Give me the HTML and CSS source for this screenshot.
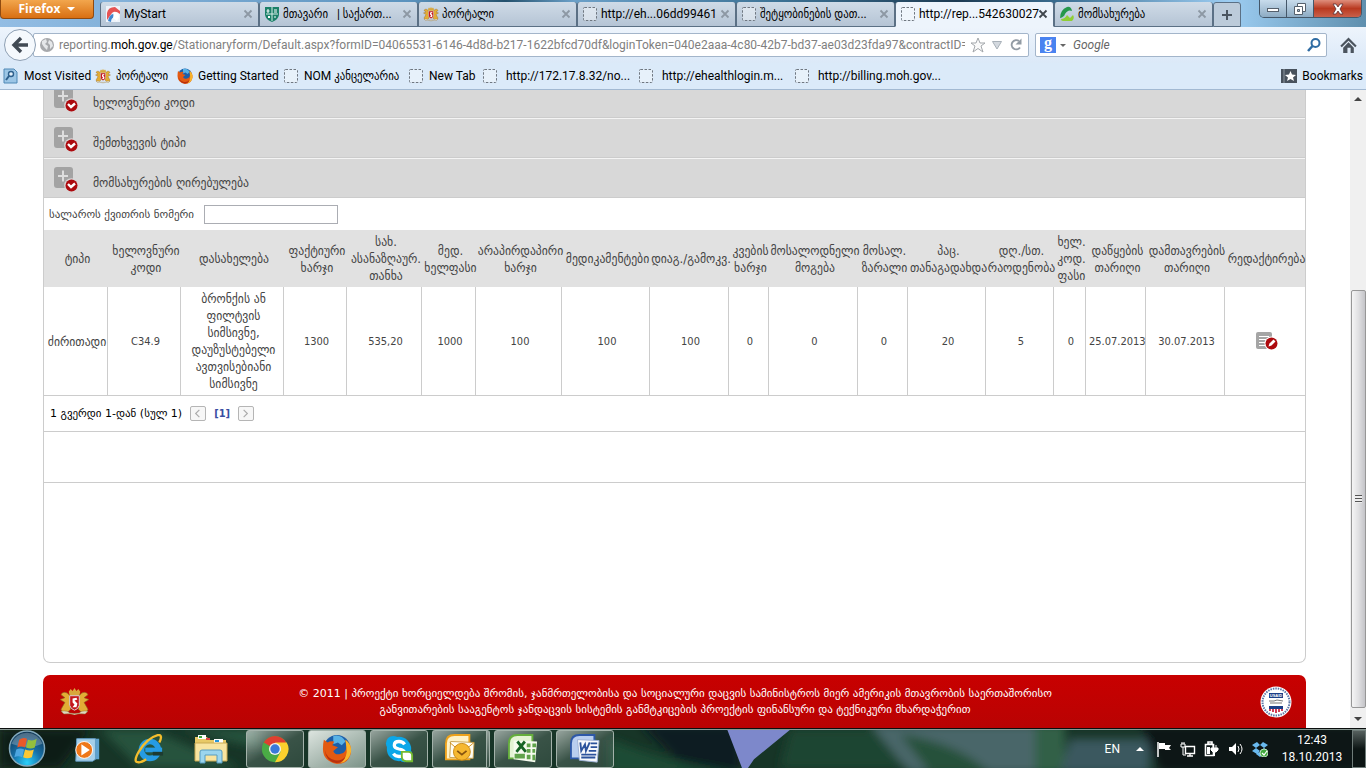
FILE: index.html
```
<!DOCTYPE html>
<html lang="ka">
<head>
  <meta charset="UTF-8" />
  <meta name="viewport" content="width=device-width, initial-scale=1.0" />
  <title>მომსახურების ღირებულება</title>
  <link rel="stylesheet" href="styles.css">
</head>
<body>
  <svg class="defs" aria-hidden="true">
    <symbol id="blank" viewBox="0 0 16 16">
      <rect x="1.5" y="1.5" width="13" height="13" rx="1" fill="#f4f7fb" fill-opacity=".5" stroke="#6f7780" stroke-dasharray="2.5 1.5"/>
    </symbol>
    <symbol id="close" viewBox="0 0 10 10">
      <path d="M1.5 1.5l7 7M8.500 1.500l-7 7" stroke="currentColor" stroke-width="1.8"/>
    </symbol>
    <symbol id="crest" viewBox="0 0 32 28">
      <path d="M10 4l2-3 2 2 2-3 2 3 2-2 2 3-1 4H11z" fill="#d8a73c"/>
      <path d="M11 8C8 3 3 4 2 7l4 3-5 2 5 3-4 7 2 4 5-1 3-3zM21 8c3-5 8-4 9-1l-4 3 5 2-5 3 4 7-2 4-5-1-3-3z" fill="#e2ad35" stroke="#8c5b22" stroke-width=".7"/>
      <path d="M11 8h10v10q-1 4-5 5-4-1-5-5z" fill="#c5161b" stroke="#d9d9d9"/>
      <path d="M14 11l4-1 1 2-3 1 3 3-1 4-4 0 2-3-2-2z" fill="#fff"/>
      <path d="M2 24q7-1 9 2 5 1 10 0 2-3 9-2l-3 3q-6-1-11 1-5-2-11-1z" fill="#ddd8c0" stroke="#94763c" stroke-width=".5"/>
    </symbol>
    <symbol id="expand" viewBox="0 0 26 27">
      <rect x="1" y="1" width="19" height="21" rx="3" fill="#a3a3a3"/>
      <path d="M10 4.500v11M5 10h10" stroke="#dedede" stroke-width="2"/>
      <circle cx="18.500" cy="19.500" r="7.300" fill="#d8d8d8"/>
      <circle cx="18.500" cy="19.500" r="6" fill="#ad0a0e"/>
      <path d="M15 18l3 3 4-3.500" fill="none" stroke="#fff" stroke-width="2.400"/>
    </symbol>
    <symbol id="firefox" viewBox="0 0 32 32">
      <circle cx="16" cy="15" r="14" fill="#1d5ea8"/>
      <path d="M12 2q9-2 13 6l-4 4-4-3-5 2z" fill="#58b2e6"/>
      <path d="M2 6l4 3q3-2 7-1l-2 4 6 2-5 4q2 5 8 3 6-1 6-8l-1-7q7 5 6 13-2 13-15 13Q1 29 1 16q0-6 1-10z" fill="#e35a12"/>
      <path d="M25 6q7 5 6 13-2 10-11 12 8-7 6-17z" fill="#f8b62c"/>
      <path d="M3 17q2 9 11 11 7 1 11-4-2 7-10 7Q4 29 3 17z" fill="#b9300e"/>
    </symbol>
  </svg>

  <header class="browser">
    <div class="tabstrip">
      <button class="firefox-menu">Firefox <i></i></button>
      <nav class="tabs">
        <div class="tab">
          <svg class="ico" viewBox="0 0 16 16"><rect x="1" width="14" height="16" fill="#eef3fa"/><path d="M2 14V7q1-6 8-6l5 4v3q-5-4-8-1z" fill="#e65353"/><path d="M3 15q1-6 5-7l3 3q-5 0-5 5z" fill="#3f86cf"/><path d="M9 6q5 0 5 5l-2 4-4-3z" fill="#fff"/></svg>
          <span>MyStart</span><button aria-label="Close"><svg><use href="#close"/></svg></button>
        </div>
        <div class="tab">
          <svg class="ico" viewBox="0 0 16 16"><path d="M1 1h14v8q-1 5-7 7-6-2-7-7z" fill="#1b8068"/><path d="M8 1v14M2 8h12" stroke="#d9eee8"/><path d="M4 3v4M2.500 5h3M10 4h3M10 6h3M4 10l2 2M6 10l-2 2M10 11h2" stroke="#fff"/></svg>
          <span>მთავარი &nbsp; | საქართ...</span><button aria-label="Close"><svg><use href="#close"/></svg></button>
        </div>
        <div class="tab">
          <svg class="ico"><use href="#crest"/></svg>
          <span>პორტალი</span><button aria-label="Close"><svg><use href="#close"/></svg></button>
        </div>
        <div class="tab">
          <svg class="ico"><use href="#blank"/></svg>
          <span>http://eh...06dd99461</span><button aria-label="Close"><svg><use href="#close"/></svg></button>
        </div>
        <div class="tab">
          <svg class="ico"><use href="#blank"/></svg>
          <span>შეტყობინების დათ...</span><button aria-label="Close"><svg><use href="#close"/></svg></button>
        </div>
        <div class="tab active">
          <svg class="ico"><use href="#blank"/></svg>
          <span>http://rep...542630027</span><button aria-label="Close"><svg><use href="#close"/></svg></button>
        </div>
        <div class="tab">
          <svg class="ico" viewBox="0 0 16 16"><path d="M8 1q4-1 5 4-4-2-7 3-1 3-5 4Q1 4 8 1z" fill="#25984a"/><path d="M2 13q4 0 6-4l3 3 3-3q2 3-1 6H4q-2 0-2-2z" fill="#8fce35"/></svg>
          <span>მომსახურება</span><button aria-label="Close"><svg><use href="#close"/></svg></button>
        </div>
        <button class="new-tab" aria-label="New tab"><svg viewBox="0 0 12 12"><path d="M6 1v10M1 6h10" stroke="#4b5560" stroke-width="2"/></svg></button>
      </nav>
      <div class="window-buttons">
        <button aria-label="Minimize"><svg viewBox="0 0 14 14"><rect x="1.500" y="6.500" width="11" height="3" fill="#fff" stroke="#55606c"/></svg></button>
        <button aria-label="Restore"><svg viewBox="0 0 14 14"><path d="M4.500 1.500h8v8h-8z" fill="#fff" stroke="#55606c"/><path d="M1.500 4.500h8v8h-8z" fill="#fff" stroke="#55606c"/><path d="M4.500 7.500h2v2h-2z" fill="#a8bed2" stroke="#55606c"/></svg></button>
        <button class="close" aria-label="Close window"><svg viewBox="0 0 14 14"><path d="M2 2h3l2 3 2-3h3L9 7l3 5H9L7 9l-2 3H2l3-5z" fill="#fff" stroke="#5c3036" stroke-width=".8"/></svg></button>
      </div>
    </div>

    <div class="toolbar">
      <button class="back" aria-label="Back"><svg viewBox="0 0 18 18"><path d="M10 2L3 9l7 7M3 9h14" fill="none" stroke="#414a54" stroke-width="3.400"/></svg></button>
      <div class="field url">
        <svg class="ico" viewBox="0 0 16 16"><circle cx="8" cy="8" r="7" fill="#a7a9ac"/><path d="M3 4l4-2 1 3-2 2 3 2-1 4-3-3-2-3zM10 3l3 2 1 4-3 3V8L9 6z" fill="#e5e7e9"/></svg>
        <div class="address">reporting.<b>moh.gov.ge</b>/Stationaryform/Default.aspx?formID=04065531-6146-4d8d-b217-1622bfcd70df&amp;loginToken=040e2aaa-4c80-42b7-bd37-ae03d23fda97&amp;contractID=28</div>
        <svg class="ico star" viewBox="0 0 16 16"><path d="M8 1l2 5h5l-4 3 2 6-5-3.500L3 15l2-6-4-3h5z" fill="#fafafa" stroke="#a3a7ab"/></svg>
        <svg class="ico" viewBox="0 0 16 16"><path d="M3.500 4.500h9L8 12z" fill="#d4d9df" stroke="#a9b1b9"/></svg>
        <svg class="ico" viewBox="0 0 16 16"><path d="M12 10.500A4.600 4.600 0 1 1 11 4" fill="none" stroke="#929ba4" stroke-width="2"/><path d="M13.500 1.500v6h-6z" fill="#929ba4"/></svg>
      </div>
      <div class="field search">
        <span class="google">g</span><i class="caret"></i>
        <input type="text" placeholder="Google" aria-label="Search">
        <svg class="ico" viewBox="0 0 16 16"><circle cx="9.500" cy="6" r="4" fill="none" stroke="#2f6ca3" stroke-width="2"/><path d="M6.500 9l-4.500 5" stroke="#2f6ca3" stroke-width="2.500"/></svg>
      </div>
      <button class="home" aria-label="Home"><svg viewBox="0 0 16 16"><path d="M1 9l7-7 7 7" fill="none" stroke="#4b545e" stroke-width="2"/><path d="M3 10l5-5 5 5v5h-3v-5H7v5H3z" fill="#4b545e"/></svg></button>
    </div>

    <nav class="bookmarks">
      <a href="#"><svg class="ico" viewBox="0 0 16 16"><path d="M1 1h10l3 3v11H1z" fill="#9cc6e6" stroke="#4f88b5"/><circle cx="8" cy="6" r="2.500" fill="#e4f1fb" stroke="#2d5f8c" stroke-width="1.400"/><path d="M6 8l-3 4" stroke="#2d5f8c" stroke-width="2"/></svg>Most Visited</a>
      <a href="#"><svg class="ico"><use href="#crest"/></svg>პორტალი</a>
      <a href="#"><svg class="ico"><use href="#firefox"/></svg>Getting Started</a>
      <a href="#"><svg class="ico"><use href="#blank"/></svg>NOM კანცელარია</a>
      <a href="#"><svg class="ico"><use href="#blank"/></svg>New Tab</a>
      <a href="#" class="wide"><svg class="ico"><use href="#blank"/></svg>http://172.17.8.32/no...</a>
      <a href="#"><svg class="ico"><use href="#blank"/></svg>http://ehealthlogin.m...</a>
      <a href="#"><svg class="ico"><use href="#blank"/></svg>http://billing.moh.gov...</a>
      <a href="#" class="all"><svg class="ico" viewBox="0 0 16 16"><path d="M0 1h16v14H0z" fill="#48525d"/><path d="M3 1v14" stroke="#8c96a0"/><path d="M9.500 3l1.500 3.500 4 .500-3 2.500 1 3.500-3.500-2L6 13l1-3.500L4 7l4-.500z" fill="#fff"/></svg>Bookmarks</a>
    </nav>
  </header>

  <main class="viewport">
    <div class="page">
      <section class="card">
        <button class="section first"><svg><use href="#expand"/></svg><span>ხელოვნური კოდი</span></button>
        <button class="section"><svg><use href="#expand"/></svg><span>შემთხვევის ტიპი</span></button>
        <button class="section"><svg><use href="#expand"/></svg><span>მომსახურების ღირებულება</span></button>

        <div class="receipt">
          <label for="receiptNo">სალაროს ქვითრის ნომერი</label>
          <input type="text" id="receiptNo">
        </div>

        <table class="services">
          <colgroup>
            <col class="w64"><col class="w73"><col class="w103"><col class="w63"><col class="w75"><col class="w54">
            <col class="w86"><col class="w88"><col class="w79"><col class="w40"><col class="w89"><col class="w50">
            <col class="w78"><col class="w68"><col class="w32"><col class="w60"><col class="w79"><col>
          </colgroup>
          <thead>
            <tr>
              <th><span>ტიპი</span></th>
              <th><span>ხელოვნური<br>კოდი</span></th>
              <th><span>დასახელება</span></th>
              <th><span>ფაქტიური<br>ხარჯი</span></th>
              <th><span>სახ.<br>ასანაზღაურ.<br>თანხა</span></th>
              <th><span>მედ.<br>ხელფასი</span></th>
              <th><span>არაპირდაპირი<br>ხარჯი</span></th>
              <th><span>მედიკამენტები</span></th>
              <th><span>დიაგ./გამოკვ.</span></th>
              <th><span>კვების<br>ხარჯი</span></th>
              <th><span>მოსალოდნელი<br>მოგება</span></th>
              <th><span>მოსალ.<br>ზარალი</span></th>
              <th><span>პაც.<br>თანაგადახდა</span></th>
              <th><span>დღ./სთ.<br>რაოდენობა</span></th>
              <th><span>ხელ.<br>კოდ.<br>ფასი</span></th>
              <th><span>დაწყების<br>თარიღი</span></th>
              <th><span>დამთავრების<br>თარიღი</span></th>
              <th><span>რედაქტირება</span></th>
            </tr>
          </thead>
          <tbody>
            <tr>
              <td><span>ძირითადი</span></td>
              <td>C34.9</td>
              <td><span>ბრონქის ან<br>ფილტვის<br>სიმსივნე,<br>დაუზუსტებელი<br>ავთვისებიანი<br>სიმსივნე</span></td>
              <td>1300</td>
              <td>535,20</td>
              <td>1000</td>
              <td>100</td>
              <td>100</td>
              <td>100</td>
              <td>0</td>
              <td>0</td>
              <td>0</td>
              <td>20</td>
              <td>5</td>
              <td>0</td>
              <td>25.07.2013</td>
              <td>30.07.2013</td>
              <td>
                <button class="edit" aria-label="რედაქტირება"><svg viewBox="0 0 22 18"><path d="M2 0h12q2 0 2 2v15H2q-2 0-2-2V2q0-2 2-2z" fill="#a5a5a5"/><path d="M3 4.500h10M3 7.500h8M3 10.500h6M3 13.500h6" stroke="#fff"/><circle cx="15.500" cy="11.500" r="7" fill="#fff"/><circle cx="15.500" cy="11.500" r="6" fill="#ad0a0e"/><path d="M12.500 14.500l1-3 4-4 2 2-4 4z" fill="#fff"/></svg></button>
              </td>
            </tr>
          </tbody>
        </table>

        <div class="pager">
          <span>1 გვერდი 1-დან (სულ 1)</span>
          <button aria-label="წინა"><svg viewBox="0 0 14 14"><path d="M9 3L5 7l4 4" fill="none" stroke="#aaa" stroke-width="1.200"/></svg></button>
          <b>[1]</b>
          <button aria-label="შემდეგი"><svg viewBox="0 0 14 14"><path d="M5 3l4 4-4 4" fill="none" stroke="#aaa" stroke-width="1.200"/></svg></button>
        </div>
        <div class="spacer"></div>
      </section>

      <footer>
        <svg class="crest"><use href="#crest"/></svg>
        <p>© 2011 | პროექტი ხორციელდება შრომის, ჯანმრთელობისა და სოციალური დაცვის სამინისტროს მიერ ამერიკის მთავრობის საერთაშორისო<br>განვითარების სააგენტოს ჯანდაცვის სისტემის განმტკიცების პროექტის ფინანსური და ტექნიკური მხარდაჭერით</p>
        <svg class="usaid" viewBox="0 0 32 32">
          <circle cx="16" cy="16" r="15.500" fill="#fff"/>
          <circle cx="16" cy="16" r="13.500" fill="none" stroke="#5d78a8" stroke-width="2" stroke-dasharray="1.500 1"/>
          <path d="M9 7h14v5H9z" fill="#1c3f87"/>
          <text x="16" y="11" text-anchor="middle" class="seal-text">USAID</text>
          <path d="M9 15h5l3-1 6 1M10 17h12" fill="none" stroke="#777"/>
          <path d="M9 20h14v3H9z" fill="#1c3f87"/>
          <path d="M10 23v2M13 23v3M16 23v4M19 23v3M22 23v2" stroke="#c8102e" stroke-width="1.600"/>
        </svg>
      </footer>
    </div>
    <div class="scrollbar" aria-hidden="true">
      <i class="up"></i>
      <div class="thumb"><i></i></div>
      <i class="down"></i>
    </div>
  </main>

  <div class="taskbar">
    <svg class="wallpaper" viewBox="0 0 1366 40" preserveAspectRatio="none" aria-hidden="true">
      <defs><filter id="soft" x="-10%" y="-50%" width="120%" height="200%"><feGaussianBlur stdDeviation="5"/></filter></defs>
      <rect width="1366" height="40" fill="#173527"/>
      <g filter="url(#soft)">
        <path d="M0 0h90L60 40H0z" fill="#0b1a18"/>
        <path d="M100 0h50l90 40H140zM180 0h80v20z" fill="#25533c"/>
        <path d="M640 -5h100v50h-50z" fill="#0d1c20"/>
        <path d="M610 10q70 30 140 35H610z" fill="#1f4b34"/>
        <path d="M790 0h90l40 40H780z" fill="#1d4430"/>
        <path d="M870 -5h180l20 50H910z" fill="#4a6669"/>
        <path d="M900 5q60 10 90 40h-60z" fill="#27513a"/>
        <path d="M1035 -5h30v50h-30z" fill="#326047"/>
        <path d="M1070 10h80v35h-90z" fill="#3a585e"/>
        <path d="M1140 -5h230v50h-210z" fill="#0c1817"/>
      </g>
      <path d="M727 0h64l-37 31-6 9h-6z" fill="#7d88cb"/>
    </svg>
    <button class="start" aria-label="Start">
      <svg viewBox="0 0 40 40">
        <defs><radialGradient id="orb" cx=".5" cy=".9" r=".9"><stop offset="0" stop-color="#2ad0fb"/><stop offset=".45" stop-color="#1670a8"/><stop offset="1" stop-color="#123552"/></radialGradient></defs>
        <circle cx="20" cy="20" r="18" fill="url(#orb)" stroke="#83a9bc" stroke-width="1.500"/>
        <path d="M4 15a17 17 0 0 1 32 0q-15 7-32 0z" fill="#fff" opacity=".25"/>
        <path d="M12 11q4-3 8-1l-2 9q-4-2-8 0z" fill="#e8592a"/><path d="M21 11q5 2 9-1l-2 9q-4 2-9 0z" fill="#93bf3d"/>
        <path d="M9 21q4-2 8 0l-2 8q-4-2-8 0z" fill="#4da6e0"/><path d="M18 21q5 2 9 0l-2 8q-5 2-9 0z" fill="#fbc834"/>
      </svg>
    </button>
    <button class="pin" aria-label="Media Player"><svg viewBox="0 0 32 32"><path d="M6 5h23v22H6z" fill="#5ea2ce"/><path d="M5 5h20v22l-3 2H4z" fill="#a6d0ea" stroke="#619cc3"/><circle cx="13" cy="17" r="9" fill="#ee7719" stroke="#fff"/><path d="M10 11l9 6-9 6z" fill="#fff"/></svg></button>
    <button class="pin" aria-label="Internet Explorer"><svg viewBox="0 0 32 32"><circle cx="17" cy="17" r="9" fill="none" stroke="#269be3" stroke-width="6"/><path d="M12 17h18" stroke="#269be3" stroke-width="5"/><path d="M20 21h11" stroke="#1d3b31" stroke-width="4"/><path d="M27 9Q31 1 26 1 14 4 5 19-1 30 4 30q3 1 9-3" fill="none" stroke="#f4bd2d" stroke-width="2.500"/></svg></button>
    <button class="pin folder" aria-label="Explorer"><svg viewBox="0 0 34 32"><path d="M1 4h12l2 3h17v20H1z" fill="#e8c966"/><path d="M4 2h8v4H4zM20 6h9v4h-9z" fill="#fff"/><path d="M5 3h3v2H5z" fill="#36a43b"/><path d="M12 5h4v2h-4z" fill="#d44"/><path d="M21 7h4v2h-4z" fill="#2695da"/><path d="M1 10h32v18H1z" fill="#f8e4a0" stroke="#c9a953"/><path d="M6 30V19q0-2 2-2h18q2 0 2 2v11h-5v-8H11v8z" fill="#9bd5ee" stroke="#579cc0"/></svg></button>
    <button class="app" aria-label="Chrome"><svg viewBox="0 0 32 32"><circle cx="16" cy="16" r="14" fill="#4aab45"/><path d="M16 16L4 9a14 14 0 0 1 24 0z" fill="#df3f30"/><path d="M16 9h12.500A14 14 0 0 1 16 30l6-11z" fill="#fbd02d"/><circle cx="16" cy="16" r="6.500" fill="#f2f2ee"/><circle cx="16" cy="16" r="5" fill="#3a79d8"/></svg></button>
    <button class="app current" aria-label="Firefox"><svg><use href="#firefox"/></svg></button>
    <button class="app" aria-label="Skype"><svg viewBox="0 0 32 32"><circle cx="10" cy="10" r="8" fill="#0ca7e8"/><circle cx="16" cy="16" r="13" fill="#0ca7e8"/><circle cx="22" cy="22" r="8" fill="#0ca7e8"/><path d="M22 11q-2-3-6-3-5 0-5 4 0 3 5 4 6 1 6 4 0 4-6 4-4 0-6-3" fill="none" stroke="#fff" stroke-width="3.500"/><path d="M19 19h7q4 0 4 4v6h-6q-5 0-5-5z" fill="#fff" stroke="#72b92f" stroke-width="2"/></svg></button>
    <button class="app stack" aria-label="Outlook"><svg viewBox="0 0 32 32"><path d="M1 27V10Q1 1 10 1h16v26z" fill="#fff2c6" stroke="#eda21c" stroke-width="2"/><path d="M6 8l25 1-1 17-25-1z" fill="#fffdf2" stroke="#c6a04d"/><path d="M5 9l13 11L31 9" fill="none" stroke="#d18d18"/><circle cx="18" cy="19" r="9" fill="#f6b830" stroke="#ca8914"/><path d="M13 18l5 4 5-4" fill="none" stroke="#87540f" stroke-width="2"/></svg></button>
    <button class="app" aria-label="Excel"><svg viewBox="0 0 32 32"><path d="M1 26V10Q1 1 10 1h16v25z" fill="#e4f3d4" stroke="#65ae3d" stroke-width="2"/><path d="M6 7l25 1-2 22-23-3z" fill="#f6fbef"/><path d="M20 10h4v4h-4zM26 10h4v4h-4zM20 16h4v4h-4zM26 16h3v4h-3zM20 22h4v5h-4zM26 22h3v6h-3zM7 21h11v5H7z" fill="#60a34a"/><path d="M10 8l9 11M18 8l-9 11" stroke="#176425" stroke-width="3"/></svg></button>
    <button class="app" aria-label="Word"><svg viewBox="0 0 32 32"><path d="M1 26V10Q1 1 10 1h16v25z" fill="#b9ceef" stroke="#2d58a8" stroke-width="2"/><path d="M8 6l23 1-2 23-19-2z" fill="#f7f9fd" stroke="#9bb0d3"/><path d="M11 9l1 9 4-7 1 7 4-9M22 10h7M22 14h7M20 18h8M12 22h16M12 25h15" fill="none" stroke="#2b529c" stroke-width="2"/></svg></button>

    <div class="tray">
      <span class="lang">EN</span>
      <svg class="more" viewBox="0 0 8 4"><path d="M4 0l4 4H0z" fill="#fff"/></svg>
      <svg viewBox="0 0 16 16"><path d="M2 1v15" stroke="#fff" stroke-width="1.500"/><path d="M3 2h6v2h6l-2 3 2 2H9V8H3z" fill="#fff"/></svg>
      <svg viewBox="0 0 16 16"><path d="M5.500 5.500h9v7h-9zM7 15h6M10 12v3" fill="none" stroke="#fff" stroke-width="1.400"/><path d="M1 3h4v3H1zM2 1v2M4 1v2M3 6v8h3" fill="none" stroke="#fff"/></svg>
      <svg viewBox="0 0 16 16"><path d="M1.500 3.500h8v11h-8zM4 1h4v2H4z" fill="none" stroke="#fff" stroke-width="1.600"/><path d="M3 6h3v7H3z" fill="#fff"/><path d="M7 7h7v2l-2 2H9L7 9zM9 4v3M12 4v3M10.500 11v4" fill="#fff" stroke="#fff"/></svg>
      <svg viewBox="0 0 16 16"><path d="M1 6h3l4-4v12l-4-4H1z" fill="#fff"/><path d="M10 5q2 3 0 6M12 3q4 5 0 10" fill="none" stroke="#fff"/></svg>
      <svg viewBox="0 0 16 16"><path d="M5 1l3 3-4 3-4-3zM11 1l5 3-4 3-4-3zM4 7l4 3-3 3-5-3zM12 7l3 2-4 4-3-3zM4 13l4-2 4 2-4 3z" fill="#69b9ef"/><circle cx="12" cy="12" r="4" fill="#41a83d" stroke="#d5f1d0" stroke-width=".8"/><path d="M10 12l2 2 3-4" fill="none" stroke="#fff" stroke-width="1.200"/></svg>
      <time>12:43<br>18.10.2013</time>
      <button class="desktop" aria-label="Show desktop"></button>
    </div>
  </div>
</body>
</html>
```
FILE: styles.css
```
:root {
  --line: #ccc;
  --ui-font: Roboto, "DejaVu Sans Condensed", sans-serif;
  --page-font: "DejaVu Sans Condensed", "DejaVu Sans", sans-serif;
  --wide-font: "DejaVu Sans", sans-serif;
}

* {
  box-sizing: border-box;
}

body {
  margin: 0;
  height: 100vh;
  display: flex;
  flex-direction: column;
  overflow: hidden;
  background: #fff;
  font-family: var(--ui-font);
  font-size: 12px;
  color: #000;
}

button {
  font: inherit;
  color: inherit;
  border: 0;
  padding: 0;
  background: none;
}

a {
  color: inherit;
  text-decoration: none;
}

svg {
  display: block;
  flex: none;
}

.defs {
  display: none;
}

.ico {
  width: 16px;
  height: 16px;
}

/* browser chrome */
.browser {
  background: #dbeaf9;
  border-bottom: 1px solid #a2b9d2;
}

.tabstrip {
  display: flex;
  align-items: flex-start;
  height: 27px;
  background: linear-gradient(90deg, #93bde4 0, #5b93be 30%, #24516d 37%, #6ba0c8 42%, #3c7295 57%, #1c3a52 70%, #3d7195 78%, #9dcdf2 90%, #5f8fae 100%);
}

.firefox-menu {
  width: 94px;
  height: 19px;
  margin-right: 6px;
  border: 1px solid #8f4a10;
  border-top: 0;
  border-radius: 0 0 4px 4px;
  background: linear-gradient(#f2a64d, #d96f12);
  color: #fff;
  font: bold 12px/16px "Open Sans", sans-serif;
}

.firefox-menu i {
  display: inline-block;
  margin: 0 0 2px 4px;
  border: 4px solid transparent;
  border-top-color: #fff;
  border-bottom: 0;
}

.tabs {
  display: flex;
  flex: 1;
  padding-top: 2px;
}

.tab {
  display: flex;
  align-items: center;
  flex: 0 1 159px;
  min-width: 0;
  height: 25px;
  padding: 0 5px 0 4px;
  gap: 3px;
  border: 1px solid #5b7085;
  border-width: 0 1px 1px;
  border-radius: 3px 3px 0 0;
  background: linear-gradient(#cfdbe7, #b5c4d5);
  white-space: nowrap;
}

.tab span {
  flex: 1;
  min-width: 0;
}

.tab button,
.tab button svg {
  width: 10px;
  height: 10px;
  color: #8d98a4;
}

.tab.active {
  background: #edf4fc;
  border-bottom-color: #edf4fc;
}

.tab.active button svg {
  color: #3f464d;
}

.new-tab {
  width: 28px;
  height: 25px;
  border: 1px solid #5b7085;
  border-radius: 3px 3px 0 0;
  background: #bccbda;
}

.new-tab svg {
  width: 12px;
  height: 12px;
  margin: auto;
}

.window-buttons {
  display: flex;
  margin-right: 4px;
  height: 18px;
  border: 1px solid #445769;
  border-top: 0;
  border-radius: 0 0 5px 5px;
  overflow: hidden;
}

.window-buttons button {
  width: 27px;
  background: linear-gradient(#c8dcec, #8dabc3);
  border-right: 1px solid #445769;
}

.window-buttons .close {
  width: 47px;
  border: 0;
  background: linear-gradient(#df8e7c, #b93920 50%, #c9604a);
}

.window-buttons svg {
  width: 14px;
  height: 14px;
  margin: auto;
}

.toolbar {
  display: flex;
  align-items: center;
  height: 36px;
  padding: 0 9px 0 4px;
  background: linear-gradient(#edf4fc, #dbe9f8);
}

.back {
  width: 32px;
  height: 32px;
  border: 1px solid #8ea0b4;
  border-radius: 50%;
  background: #f5f9fd;
  z-index: 1;
}

.back svg {
  width: 18px;
  height: 18px;
  margin: auto;
}

.field {
  display: flex;
  align-items: center;
  height: 24px;
  border: 1px solid #a3b5ca;
  border-radius: 2px;
  background: #fff;
}

.url {
  flex: 1;
  min-width: 0;
  margin: 0 6px 0 -3px;
  padding: 0 4px 0 5px;
  gap: 3px;
}

.address {
  flex: 1;
  overflow: hidden;
  white-space: nowrap;
  color: #808080;
  margin-left: 1px;
}

.address b {
  font-weight: normal;
  color: #000;
}

.url .star {
  margin-left: 2px;
}

.search {
  width: 292px;
  padding: 0 4px;
}

.google {
  width: 16px;
  height: 16px;
  background: #4a83f0;
  color: #fff;
  font: bold 16px/11px "Liberation Serif", serif;
  text-align: center;
}

.caret {
  margin: 0 7px 0 4px;
  border: 3px solid transparent;
  border-top-color: #666;
  border-bottom: 0;
}

.search input {
  flex: 1;
  min-width: 0;
  border: 0;
  padding: 0;
  background: none;
  font: italic 12px var(--ui-font);
}

.search input::placeholder {
  color: #666;
}

.home {
  margin-left: 13px;
}

.home svg {
  width: 17px;
  height: 17px;
}

.bookmarks {
  display: grid;
  grid-template-columns: 92px 82px 106px 125px 74px 156px 156px 160px auto;
  align-items: center;
  height: 26px;
  padding: 0 3px;
}

.bookmarks a {
  display: flex;
  align-items: center;
  gap: 5px;
  white-space: nowrap;
}

.bookmarks .wide,
.bookmarks .wide ~ a:not(.all) {
  gap: 8px;
}

.bookmarks .all {
  justify-content: flex-end;
}

/* page */
.viewport {
  flex: 1;
  min-height: 0;
  display: flex;
  overflow: hidden;
  font-family: var(--page-font);
  font-size: 11px;
  color: #444;
}

.page {
  flex: 1;
  min-width: 0;
  display: flex;
  flex-direction: column;
  padding: 0 44px 0 43px;
}

.card {
  flex: 1;
  display: flex;
  flex-direction: column;
  border: 1px solid var(--line);
  border-top: 0;
  border-radius: 0 0 7px 7px;
  margin-bottom: 12px;
}

.section {
  display: flex;
  align-items: flex-end;
  flex: none;
  height: 40px;
  padding: 0 9px 4px;
  gap: 14px;
  border-top: 1px solid #f4f4f4;
  border-bottom: 1px solid var(--line);
  background: #d8d8d8;
  font-size: 13px;
  overflow: hidden;
}

.section.first {
  height: 28px;
  border-top: 0;
}

.section svg {
  width: 26px;
  height: 27px;
}

.section span {
  line-height: 20px;
}

.receipt {
  display: flex;
  align-items: center;
  gap: 10px;
  height: 32px;
  padding-left: 5px;
  font-family: var(--wide-font);
}

.receipt input {
  width: 134px;
  height: 19px;
  border: 1px solid #abadb3;
}

.services {
  width: 100%;
  table-layout: fixed;
  border-collapse: separate;
  border-spacing: 0;
  line-height: 17px;
}

.w32 { width: 32px; }
.w40 { width: 40px; }
.w50 { width: 50px; }
.w54 { width: 54px; }
.w60 { width: 60px; }
.w63 { width: 63px; }
.w64 { width: 64px; }
.w68 { width: 68px; }
.w73 { width: 73px; }
.w75 { width: 75px; }
.w78 { width: 78px; }
.w79 { width: 79px; }
.w86 { width: 86px; }
.w88 { width: 88px; }
.w89 { width: 89px; }
.w103 { width: 103px; }

.services th,
.services td {
  padding: 3px 0 3px 3px;
  text-align: center;
  font-weight: normal;
  white-space: nowrap;
}

/* long words keep centred when they are wider than the column */
.services span {
  display: flex;
  flex-direction: column;
  align-items: center;
  font-size: 13px;
}

.services th {
  background: #e1e1e1;
  height: 57px;
}

.services td {
  height: 109px;
  border-right: 1px solid var(--line);
  border-bottom: 1px solid var(--line);
}

.services td:last-child {
  border-right: 0;
}

.edit {
  vertical-align: middle;
}

.edit svg {
  width: 22px;
  height: 18px;
}

.pager {
  display: flex;
  align-items: center;
  gap: 8px;
  height: 36px;
  padding-left: 6px;
  border-bottom: 1px solid var(--line);
  font-family: var(--wide-font);
  color: #000;
}

.pager button {
  width: 16px;
  height: 15px;
  border: 1px solid #b5b5b5;
  border-radius: 2px;
  background: #f7f7f7;
}

.pager button svg {
  width: 13px;
  height: 13px;
}

.pager b {
  font-family: var(--page-font);
  color: #394ea2;
}

.spacer {
  height: 51px;
  border-bottom: 1px solid var(--line);
}

footer {
  display: flex;
  align-items: center;
  justify-content: space-between;
  height: 53px;
  padding: 0 14px 0 16px;
  border-radius: 7px 7px 0 0;
  background: linear-gradient(#c80000, #b90303);
  color: #fff;
}

footer p {
  margin: 0;
  text-align: center;
  font-family: var(--wide-font);
  line-height: 16px;
  white-space: nowrap;
}

.crest {
  width: 31px;
  height: 27px;
}

.usaid {
  width: 32px;
  height: 32px;
}

.seal-text {
  font: bold 4px "Liberation Sans", sans-serif;
  fill: #fff;
}

.scrollbar {
  width: 16px;
  display: flex;
  flex-direction: column;
  align-items: center;
  justify-content: space-between;
  padding: 7px 0;
  background: #f0f0f0;
}

.scrollbar > i {
  border: 4px solid transparent;
}

.scrollbar .up {
  border-bottom-color: #444;
  border-top: 0;
}

.scrollbar .down {
  border-top-color: #444;
  border-bottom: 0;
}

.thumb {
  display: flex;
  align-items: center;
  justify-content: center;
  width: 15px;
  height: 67%;
  margin: auto 0 9px;
  border: 1px solid #979797;
  border-radius: 2px;
  background: linear-gradient(90deg, #f5f5f5, #e0e0e2 50%, #c4c4c8);
}

.thumb i {
  width: 7px;
  height: 8px;
  background: repeating-linear-gradient(#555 0 1px, #eee 1px 3px);
}

/* taskbar */
.taskbar {
  position: relative;
  display: flex;
  align-items: center;
  height: 40px;
  padding-left: 7px;
  border-top: 1px solid #0b0f0e;
  box-shadow: inset 0 1px #879691;
  color: #fff;
}

.wallpaper {
  position: absolute;
  inset: 0;
  width: 100%;
  height: 100%;
  z-index: -1;
}

.start svg {
  width: 40px;
  height: 39px;
}

.pin {
  width: 62px;
}

.start + .pin {
  margin-left: 9px;
}

.pin svg,
.app svg {
  width: 30px;
  height: 30px;
  margin: auto;
}

.folder {
  margin-right: 4px;
}

.folder svg {
  width: 34px;
  height: 32px;
}

.app {
  width: 58px;
  height: 38px;
  margin-right: 4px;
  border: 1px solid #a3b2aa;
  border-radius: 3px;
  background: linear-gradient(150deg, rgba(255, 255, 255, .55), rgba(255, 255, 255, .15) 50%, rgba(255, 255, 255, .1));
}

.app.current {
  background: linear-gradient(150deg, #dce4df, #7c9388);
}

.app.stack {
  border-right: 4px double #a3b2aa;
}

.tray {
  display: flex;
  align-items: center;
  gap: 8px;
  height: 100%;
  margin-left: auto;
}

.tray svg {
  width: 16px;
  height: 16px;
}

.tray .more {
  width: 8px;
  height: 4px;
  margin: 0 4px 0 8px;
}

.tray time {
  width: 72px;
  margin-right: -4px;
  text-align: center;
  line-height: 17px;
}

.desktop {
  width: 14px;
  height: 38px;
  border: 1px solid #6f7c79;
  background: linear-gradient(#56605e, #0c1514 50%);
}
```
